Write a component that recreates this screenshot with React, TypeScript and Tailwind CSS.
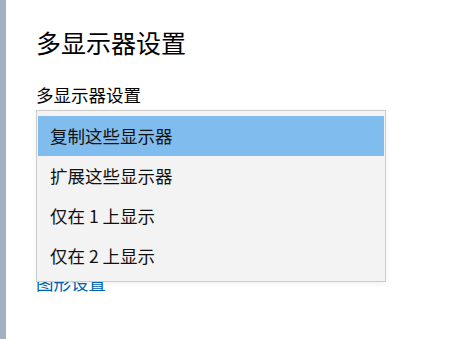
const options = ["复制这些显示器", "扩展这些显示器", "仅在 1 上显示", "仅在 2 上显示"];

export default function App() {
  const selected = 0;
  return (
    <div
      className="flex w-[452px] h-[339px] bg-white overflow-hidden text-black"
      style={{ fontFamily: '"Noto Sans CJK SC", "Noto Sans", sans-serif' }}
    >
      <div className="w-[6px] shrink-0 bg-[#a4b0c1]" />
      <div className="relative flex-1 pl-[30px]">
        <h1 className="mt-[30px] text-[25px] leading-[25px] font-normal">多显示器设置</h1>
        <div className="mt-[31px] text-[17.5px] leading-[17px]">多显示器设置</div>
        <a className="block mt-[171px] text-[17.5px] leading-[17px] text-[#0063b1]">图形设置</a>

        {/* open dropdown list */}
        <div className="absolute left-[30px] top-[110px] w-[350px] h-[172px] border border-[#cccccc] bg-[#f3f3f3] px-[1px] pt-[5px] shadow-[0_2px_6px_rgba(0,0,0,0.06)]">
          {options.map((o, i) => (
            <div
              key={o}
              className={
                "h-[40px] flex items-center pl-[12px] text-[17.5px] text-[#111] " +
                (i === selected ? "bg-[#80bdee]" : "")
              }
            >
              {o}
            </div>
          ))}
        </div>
      </div>
    </div>
  );
}
